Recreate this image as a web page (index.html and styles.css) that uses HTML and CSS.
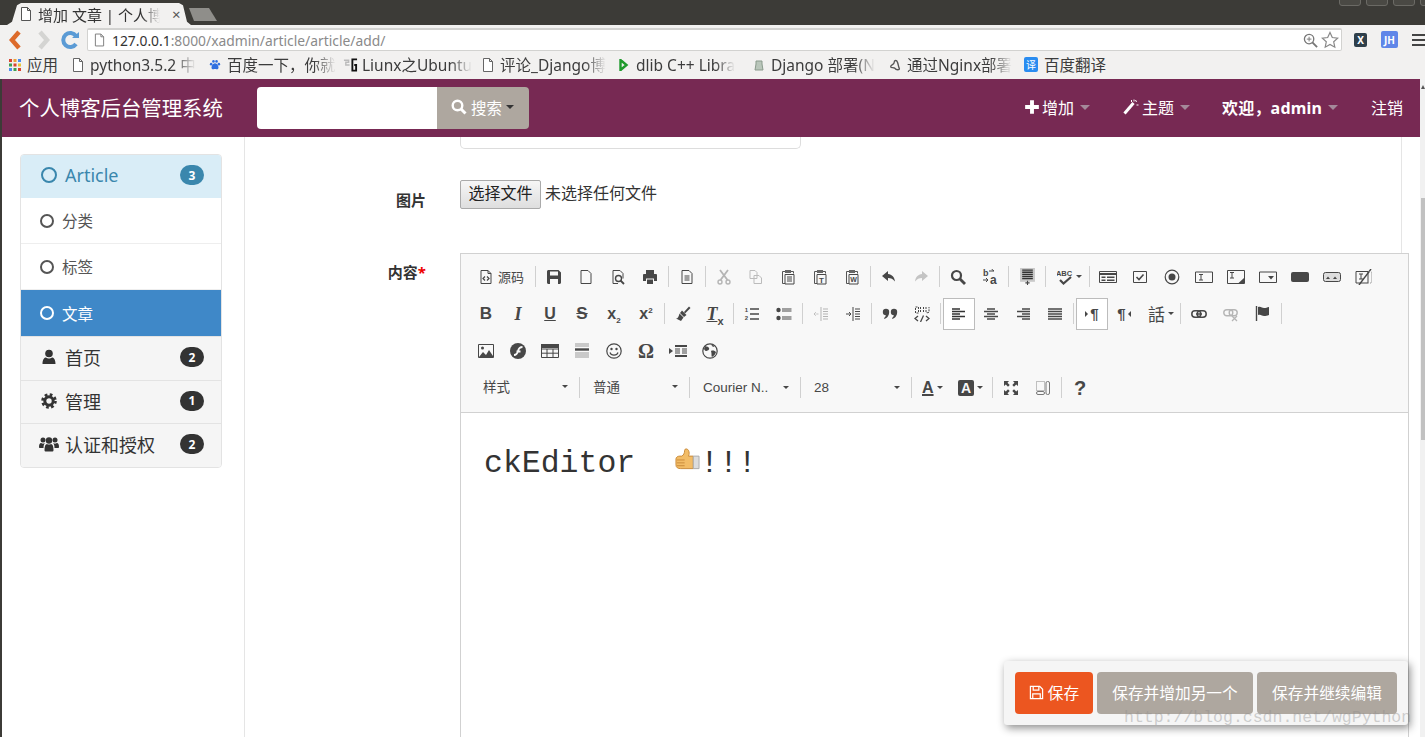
FILE: index.html
```html
<!DOCTYPE html>
<html>
<head>
	<title>增加 文章 | 个人博客后台管理系统</title>
	<link rel="stylesheet" href="styles.css">
</head>
<body>
<div class="window">
	<div class="titlebar">
		<div class="tab">
			<svg class="tab-icon" viewBox="0 0 12 14"><path d="M1.5 .5h6l3 3v10h-9zM7.5 .5v3h3" fill="#fff" stroke="#555"/></svg>
			<span class="tab-title">增加 文章 | 个人博</span>
			<span class="tab-close">×</span>
		</div>
		<div class="new-tab"></div>
		<div class="win-btns"><span></span><span></span><span></span><span></span></div>
	</div>

	<div class="toolbar">
		<svg class="nav-icon" viewBox="0 0 20 22"><path d="M13 3l-7 8 7 8" fill="none" stroke="#dd6a2a" stroke-width="4.5"/></svg>
		<svg class="nav-icon" viewBox="0 0 20 22"><path d="M7 3l7 8-7 8" fill="none" stroke="#d4d4d2" stroke-width="4.5"/></svg>
		<svg class="nav-icon" viewBox="0 0 20 22"><path d="M16 7a7 7 0 1 0 0 8" fill="none" stroke="#5b9bd5" stroke-width="4"/><path d="M12 9h7V3z" fill="#5b9bd5"/></svg>
		<div class="address">
			<svg class="addr-icon" viewBox="0 0 12 14"><path d="M1.5 .5h6l3 3v10h-9zM7.5 .5v3h3" fill="#fff" stroke="#777"/></svg>
			<span class="host">127.0.0.1</span><span class="path">:8000/xadmin/article/article/add/</span>
			<svg class="addr-zoom" viewBox="0 0 16 16"><circle cx="6.5" cy="6.5" r="5" fill="none" stroke="#777" stroke-width="1.4"/><path d="M10 10l5 5" stroke="#777" stroke-width="2"/><path d="M4 6.5h5M6.5 4v5" stroke="#777"/></svg>
			<svg class="addr-star" viewBox="0 0 18 18"><path d="M9 1.5l2.3 5 5.4.6-4 3.7 1.1 5.4L9 13.5l-4.8 2.7 1.1-5.4-4-3.700 5.400-.6z" fill="#fff" stroke="#888" stroke-width="1.2"/></svg>
		</div>
		<span class="ext ext-x">X</span>
		<span class="ext ext-jh">JH</span>
		<span class="menu-icon"><i></i><i></i><i></i></span>
	</div>

	<div class="bookmarks">
		<span class="bm bm-apps">
			<svg class="bm-icon" viewBox="0 0 12 12"><path d="M0 0h3v3H0z" fill="#d9432f"/><path d="M4.5 0h3v3h-3z" fill="#e8a33a"/><path d="M9 0h3v3H9z" fill="#4a8df0"/><path d="M0 4.5h3v3H0z" fill="#3e9e50"/><path d="M4.5 4.5h3v3h-3z" fill="#d9432f"/><path d="M9 4.5h3v3H9z" fill="#e8c53a"/><path d="M0 9h3v3H0z" fill="#4a8df0"/><path d="M4.5 9h3v3h-3z" fill="#3e9e50"/><path d="M9 9h3v3H9z" fill="#d9432f"/></svg>
			<span class="bm-text">应用</span>
		</span>
		<span class="bm bm-python">
			<svg class="bm-icon" viewBox="0 0 12 14"><path d="M1.5 .5h6l3 3v10h-9zM7.5 .5v3h3" fill="#fff" stroke="#666"/></svg>
			<span class="bm-text fade">python3.5.2 中</span>
		</span>
		<span class="bm bm-baidu">
			<svg class="bm-icon" viewBox="0 0 14 14"><path d="M3 9c1-3 2.5-4 4-4s3 1 4 4c.6 2-1 3.5-2.5 3-1-.3-2-.3-3 0C4 12.5 2.4 11 3 9z" fill="#2f6fe0"/><circle cx="2.5" cy="6" r="1.5" fill="#2f6fe0"/><circle cx="5.2" cy="2.8" r="1.5" fill="#2f6fe0"/><circle cx="8.8" cy="2.8" r="1.5" fill="#2f6fe0"/><circle cx="11.5" cy="6" r="1.5" fill="#2f6fe0"/></svg>
			<span class="bm-text fade">百度一下，你就</span>
		</span>
		<span class="bm bm-liunx">
			<svg class="bm-icon wide" viewBox="0 0 16 14"><path d="M1 2h5v2H3v3h4" fill="none" stroke="#bbb" stroke-width="1.5"/><path d="M15 1H10v12h4V7h-2" fill="none" stroke="#111" stroke-width="2"/></svg>
			<span class="bm-text fade">Liunx之Ubuntu</span>
		</span>
		<span class="bm bm-comment">
			<svg class="bm-icon" viewBox="0 0 12 14"><path d="M1.5 .5h6l3 3v10h-9zM7.5 .5v3h3" fill="#fff" stroke="#666"/></svg>
			<span class="bm-text fade">评论_Django博</span>
		</span>
		<span class="bm bm-dlib">
			<svg class="bm-icon" viewBox="0 0 10 14"><path d="M1.5 1v12M1.5 2l6 5-6 5" fill="none" stroke="#1f9a2c" stroke-width="2.4"/></svg>
			<span class="bm-text fade">dlib C++ Libra</span>
		</span>
		<span class="bm bm-deploy">
			<svg class="bm-icon" viewBox="0 0 12 14"><path d="M3 3h6v3l1 6H2l1-6z" fill="#b9c6ba" stroke="#8a9a8c"/></svg>
			<span class="bm-text fade">Django 部署(N</span>
		</span>
		<span class="bm bm-nginx">
			<svg class="bm-icon" viewBox="0 0 14 14"><path d="M2 9c0-3 4-2 4-5S9 1 10 4s1 5 2 7-4 2-5 0-5 0-5-2z" fill="none" stroke="#555" stroke-width="1.6"/></svg>
			<span class="bm-text fade">通过Nginx部署</span>
		</span>
		<span class="bm">
			<span class="bm-fanyi">译</span>
			<span class="bm-text">百度翻译</span>
		</span>
	</div>

	<div class="page">
		<div class="page-main">
			<nav class="navbar">
				<span class="brand">个人博客后台管理系统</span>
				<div class="search">
					<div class="search-input"></div>
					<div class="search-btn">
						<svg class="nav-svg" viewBox="0 0 16 16"><circle cx="6.5" cy="6.5" r="4.8" fill="none" stroke="#fff" stroke-width="2.4"/><path d="M10 10l4.5 4.5" stroke="#fff" stroke-width="3"/></svg>
						<span>搜索</span><span class="caret dark"></span>
					</div>
				</div>
				<div class="nav-right">
					<span class="nav-item nav-add">
						<svg class="nav-svg" viewBox="0 0 14 14"><path d="M7 1v12M1 7h12" stroke="#fff" stroke-width="3.4"/></svg>
						<span>增加</span><span class="caret"></span>
					</span>
					<span class="nav-item nav-theme">
						<svg class="nav-svg nav-wand" viewBox="0 0 16 16"><path d="M2 14.5L11 4" stroke="#fff" stroke-width="3"/><path d="M9 1v2M14 6h2M13 1l1 2M11.5 .5v2" stroke="#fff"/></svg>
						<span>主题</span><span class="caret"></span>
					</span>
					<span class="nav-item nav-user"><b>欢迎，admin</b><span class="caret"></span></span>
					<span class="nav-item nav-logout">注销</span>
				</div>
			</nav>

			<div class="content">
				<aside class="sidebar">
					<ul class="side-list">
						<li class="side-head">
							<span class="ring ring-big"></span><span class="side-label">Article</span>
							<span class="badge badge-blue">3</span>
						</li>
						<li class="side-sub"><span class="ring"></span>分类</li>
						<li class="side-sub"><span class="ring"></span>标签</li>
						<li class="side-sub active"><span class="ring"></span>文章</li>
						<li class="side-top">
							<svg class="side-icon" viewBox="0 0 16 16"><circle cx="8" cy="4.5" r="3.8"/><path d="M1.5 15c0-5 2-6.5 3.500-6.500 1 .8 2 1 3 1s2-.2 3-1c1.500 0 3.500 1.500 3.500 6.500z"/></svg>
							<span class="side-label">首页</span><span class="badge">2</span>
						</li>
						<li class="side-top">
							<svg class="side-icon" viewBox="0 0 16 16"><circle cx="8" cy="8" r="4.2" fill="none" stroke="#333" stroke-width="3"/><circle cx="8" cy="8" r="6.5" fill="none" stroke="#333" stroke-width="2.6" stroke-dasharray="2.7 2.4"/></svg>
							<span class="side-label">管理</span><span class="badge">1</span>
						</li>
						<li class="side-top">
							<svg class="side-icon side-icon-wide" viewBox="0 0 20 16"><circle cx="4" cy="4" r="2.5"/><circle cx="16" cy="4" r="2.5"/><path d="M0 11c0-3 1-4 2-4l2 .8L6 7c-1 1-1.5 2.5-1.5 5H1c-.6 0-1-.4-1-1zM20 11c0-3-1-4-2-4l-2 .8L14 7c1 1 1.5 2.5 1.5 5H19c.6 0 1-.4 1-1z"/><circle cx="10" cy="4.5" r="3.2"/><path d="M5.5 14c0-4 1-6 2.5-6 1 .8 3 .8 4 0 1.5 0 2.5 2 2.5 6 0 1-.5 1.5-1.5 1.5H7c-1 0-1.5-.5-1.5-1.5z"/></svg>
							<span class="side-label">认证和授权</span><span class="badge">2</span>
						</li>
					</ul>
				</aside>

				<main class="main">
					<div class="cut-input"></div>

					<div class="form-row row-image">
						<label class="form-label">图片</label>
						<div class="file-field">
							<span class="file-btn">选择文件</span>
							<span class="file-name">未选择任何文件</span>
						</div>
					</div>

					<div class="form-row row-body">
						<label class="form-label">内容<em>*</em></label>
						<div class="editor">
							<div class="ck-toolbar">
								<div class="ck-row">
									<span class="ck-btn ck-source">
										<svg class="ic" viewBox="0 0 16 16"><path d="M3 1.5h7l3 3v10H3zM10 1.5v3h3" fill="none" stroke="#474747"/><path d="M7 7.5L5 9.5l2 2M9 7.5l2 2-2 2" fill="none" stroke="#474747" stroke-width="1.2"/></svg>
										<span class="ck-src-text">源码</span>
									</span>
									<i class="sep"></i>
									<span class="ck-btn"><svg class="ic" viewBox="0 0 16 16"><path d="M1 2.5C1 1.7 1.7 1 2.5 1h10L15 3.5v10c0 .8-.7 1.5-1.5 1.5h-11C1.7 15 1 14.3 1 13.5zM4 2.5v4h8v-4zM4 10v5h8v-5z" fill="#474747" fill-rule="evenodd"/></svg></span>
									<span class="ck-btn"><svg class="ic" viewBox="0 0 16 16"><path d="M3 1.5h7l3 3v10H3z" fill="none" stroke="#474747"/></svg></span>
									<span class="ck-btn"><svg class="ic" viewBox="0 0 16 16"><path d="M3 14.5v-13h7l3 3v5M3 14.5h5" fill="none" stroke="#474747"/><circle cx="8.5" cy="9.5" r="3" fill="none" stroke="#474747" stroke-width="1.4"/><path d="M10.5 11.5l3.5 3.5" stroke="#474747" stroke-width="1.8"/></svg></span>
									<span class="ck-btn"><svg class="ic" viewBox="0 0 16 16"><path d="M4 1h8v4H4zM1 6c0-.5.5-1 1-1h12c.5 0 1 .5 1 1v6h-3V9.5H4V12H1zM5 10.5h6V15H5z" fill="#474747"/></svg></span>
									<i class="sep"></i>
									<span class="ck-btn"><svg class="ic" viewBox="0 0 16 16"><path d="M3 1.5h7l3 3v10H3z" fill="none" stroke="#474747"/><path d="M5.5 7h5M5.5 9h5M5.5 11h5" stroke="#474747"/></svg></span>
									<i class="sep"></i>
									<span class="ck-btn"><svg class="ic" viewBox="0 0 16 16"><path d="M4 1l7.5 10M12 1L4.5 11" stroke="#b5b5b5" stroke-width="1.8"/><circle cx="4" cy="13" r="2" fill="none" stroke="#b5b5b5" stroke-width="1.4"/><circle cx="12" cy="13" r="2" fill="none" stroke="#b5b5b5" stroke-width="1.4"/></svg></span>
									<span class="ck-btn"><svg class="ic" viewBox="0 0 16 16"><path d="M2 1.5h5l2 2v6H2zM6 6.5h5L13.5 9v5.5H6z" fill="#f8f8f8" stroke="#bbb"/></svg></span>
									<span class="ck-btn"><svg class="ic" viewBox="0 0 16 16"><path d="M5 2.5H2.5v12H5M11 2.5h2.5v2" fill="none" stroke="#555"/><path d="M5 1h6v3H5z" fill="#666"/><path d="M5 5.5h9V15H5z" fill="#f8f8f8" stroke="#474747"/><path d="M7 8h5M7 10h5M7 12h5" stroke="#474747"/></svg></span>
									<span class="ck-btn"><svg class="ic" viewBox="0 0 16 16"><path d="M5 2.5H2.5v12H5M11 2.5h2.5v2" fill="none" stroke="#555"/><path d="M5 1h6v3H5z" fill="#666"/><path d="M5 5.5h9V15H5z" fill="#f8f8f8" stroke="#474747"/><text x="9.5" y="13.5" class="ic-text" font-size="8">T</text></svg></span>
									<span class="ck-btn"><svg class="ic" viewBox="0 0 16 16"><path d="M5 2.5H2.5v12H5M11 2.5h2.5v2" fill="none" stroke="#555"/><path d="M5 1h6v3H5z" fill="#666"/><path d="M5 5.5h9V15H5z" fill="#f8f8f8" stroke="#474747"/><text x="9.5" y="13" class="ic-text" font-size="7">W</text></svg></span>
									<i class="sep"></i>
									<span class="ck-btn"><svg class="ic" viewBox="0 0 16 16"><path d="M7 2L1 7l6 5V9c3 0 5 1 7 3.5C13.5 8 11 5.500 7 5z" fill="#474747"/></svg></span>
									<span class="ck-btn"><svg class="ic" viewBox="0 0 16 16"><path d="M9 2l6 5-6 5V9c-3 0-5 1-7 3.5C2.5 8 5 5.5 9 5z" fill="#c4c4c4"/></svg></span>
									<i class="sep"></i>
									<span class="ck-btn"><svg class="ic" viewBox="0 0 16 16"><circle cx="6.5" cy="6.5" r="4.5" fill="none" stroke="#474747" stroke-width="2.2"/><path d="M10 10l5 5" stroke="#474747" stroke-width="2.8"/></svg></span>
									<span class="ck-btn"><svg class="ic" viewBox="0 0 16 16"><text x="1" y="7" class="ic-text left" font-size="9">b</text><text x="8" y="14.5" class="ic-text left" font-size="12">a</text><path d="M7 2h5M9.5 0L12 2M1 11h5M4 9l2 2-2 2" fill="none" stroke="#474747"/></svg></span>
									<i class="sep"></i>
									<span class="ck-btn"><svg class="ic ic-selectall" viewBox="0 0 16 16"><path d="M1 0h14v13H1z" fill="#c9c9c9"/><path d="M3 2h10M3 4h10M3 6h10M3 8h10M3 10h10" stroke="#333" stroke-width="1.2"/><path d="M6 14h4M8 12v4" stroke="#474747"/></svg></span>
									<i class="sep"></i>
									<span class="ck-btn ck-arrow-39"><svg class="ic" viewBox="0 0 16 16"><text x="7" y="6.5" class="ic-text" font-size="7.5">ABC</text><path d="M3 11l3.5 3.5L14 8" fill="none" stroke="#474747" stroke-width="2.2"/></svg><i class="mini-caret"></i></span>
									<i class="sep"></i>
									<span class="ck-btn"><svg class="ic ic-w" viewBox="0 0 18 16"><path d="M.5 2.5h17v11H.5z" fill="none" stroke="#474747"/><path d="M.5 5h17" stroke="#474747" stroke-width="2"/><path d="M2.5 7.5h4V9h-4zM2.5 10.5h4V12h-4zM8 7.5h7.5V9H8zM8 10.5h7.5V12H8z" fill="#474747"/></svg></span>
									<span class="ck-btn"><svg class="ic" viewBox="0 0 16 16"><path d="M1.5 2.5h13v11h-13z" fill="none" stroke="#474747"/><path d="M4.5 8L7 10.5l4.5-5" fill="none" stroke="#474747" stroke-width="1.6"/></svg></span>
									<span class="ck-btn"><svg class="ic" viewBox="0 0 16 16"><circle cx="8" cy="8" r="6.8" fill="none" stroke="#474747" stroke-width="1.2"/><circle cx="8" cy="8" r="3.5" fill="#474747"/></svg></span>
									<span class="ck-btn"><svg class="ic ic-w" viewBox="0 0 18 16"><path d="M.5 3h17v10.500H.5z" fill="none" stroke="#474747"/><path d="M4 5.500h4M4 11h4M6 5.500V11" stroke="#474747"/></svg></span>
									<span class="ck-btn"><svg class="ic ic-w" viewBox="0 0 18 16"><path d="M.5 1.500h17v13H.5z" fill="none" stroke="#474747"/><path d="M3 3.500h4M3 9h4M5 3.500V9" stroke="#474747"/><path d="M17 9v5.500h-6z" fill="#474747"/></svg></span>
									<span class="ck-btn"><svg class="ic ic-w" viewBox="0 0 18 16"><path d="M.5 3h17v10.500H.5z" fill="none" stroke="#474747"/><path d="M9 7h6l-3 3.500z" fill="#474747"/></svg></span>
									<span class="ck-btn"><svg class="ic ic-w" viewBox="0 0 18 16"><rect x="0" y="3" width="18" height="10" rx="2" fill="#474747"/></svg></span>
									<span class="ck-btn"><svg class="ic ic-w" viewBox="0 0 18 16"><rect x=".5" y="3.5" width="17" height="9" rx="2" fill="#ddd" stroke="#474747"/><path d="M3 10l2-2.500L7 10zM10 10l2-2.500 2 2.500z" fill="#474747"/></svg></span>
									<span class="ck-btn"><svg class="ic ic-w" viewBox="0 0 18 16"><path d="M1 2.500h12V14H1z" fill="none" stroke="#474747"/><path d="M4 5h4M4 10h4M6 5v5" stroke="#474747"/><path d="M4 16L16 0" stroke="#474747" stroke-width="1.4"/><path d="M14 3h2.500v11H10" fill="none" stroke="#999" stroke-dasharray="1 1"/></svg></span>
								</div>

								<div class="ck-row">
									<span class="ck-btn ck-txt ck-b">B</span>
									<span class="ck-btn ck-txt ck-i">I</span>
									<span class="ck-btn ck-txt ck-u">U</span>
									<span class="ck-btn ck-txt ck-s">S</span>
									<span class="ck-btn ck-txt ck-x"><span>x<sub>2</sub></span></span>
									<span class="ck-btn ck-txt ck-x"><span>x<sup>2</sup></span></span>
									<i class="sep"></i>
									<span class="ck-btn"><svg class="ic" viewBox="0 0 16 16"><path d="M9 6l5-5.500L15.500 2 10 7.500z" fill="#474747"/><path d="M7 4.500L11.500 9 9 11 5 7z" fill="#474747"/><path d="M4.500 7.500l4 4L6 15 1 12.500c2 0 2.500-1.500 3.500-5z" fill="#474747"/></svg></span>
									<span class="ck-btn ck-txt ck-tx"><span><u>T</u><sub>x</sub></span></span>
									<i class="sep"></i>
									<span class="ck-btn"><svg class="ic" viewBox="0 0 16 16"><path d="M6 3h9M6 8h9M6 13h9" stroke="#474747" stroke-width="1.5"/><text x="2.5" y="6" class="ic-text" font-size="6">1</text><text x="2.5" y="14" class="ic-text" font-size="6">2</text></svg></span>
									<span class="ck-btn"><svg class="ic" viewBox="0 0 16 16"><circle cx="2.5" cy="4" r="2.2" fill="#474747"/><circle cx="2.5" cy="12" r="2.2" fill="#474747"/><path d="M6 3h9.5M6 5h9.5M6 11h9.5M6 13h9.5" stroke="#474747"/></svg></span>
									<i class="sep"></i>
									<span class="ck-btn"><svg class="ic" viewBox="0 0 16 16"><path d="M8 1v14M10 3h5M10 5.500h5M10 8h5M10 10.500h5M10 13h5" stroke="#b5b5b5"/><path d="M1 8h5M3 6L1 8l2 2" fill="none" stroke="#b5b5b5" stroke-dasharray="1 .6"/></svg></span>
									<span class="ck-btn"><svg class="ic" viewBox="0 0 16 16"><path d="M8 1v14M10 3h5M10 5.500h5M10 8h5M10 10.500h5M10 13h5" stroke="#474747"/><path d="M1 8h5M4 6l2 2-2 2" fill="none" stroke="#474747"/></svg></span>
									<i class="sep"></i>
									<span class="ck-btn"><svg class="ic" viewBox="0 0 16 16"><circle cx="4" cy="6" r="3.2" fill="#474747"/><path d="M7 6c0 4-2 6-4.500 7L2 12c1.500-1 2-2.500 2-4z" fill="#474747"/><circle cx="12" cy="6" r="3.2" fill="#474747"/><path d="M15 6c0 4-2 6-4.500 7L10 12c1.500-1 2-2.500 2-4z" fill="#474747"/></svg></span>
									<span class="ck-btn"><svg class="ic" viewBox="0 0 16 16"><path d="M1.5 1h3v6h-3zM6.500 1v5M9.500 1v5M12 1v5c0 1 3 1 3 0V1" fill="none" stroke="#474747" stroke-dasharray="2 1"/><path d="M4 10l-3 2.500L4 15M12 10l3 2.500-3 2.500M9.500 9.500L6.500 16" fill="none" stroke="#474747" stroke-width="1.3"/></svg></span>
									<i class="sep"></i>
									<span class="ck-btn boxed"><svg class="ic" viewBox="0 0 16 16"><path d="M1 3h8M1 5.500h13M1 8h8M1 10.500h13M1 13h8" stroke="#333" stroke-width="1.3"/></svg></span>
									<span class="ck-btn"><svg class="ic" viewBox="0 0 16 16"><path d="M4 3h8M1 5.500h14M4 8h8M1 10.500h14M4 13h8" stroke="#474747" stroke-width="1.3"/></svg></span>
									<span class="ck-btn"><svg class="ic" viewBox="0 0 16 16"><path d="M7 3h8M2 5.500h13M7 8h8M2 10.500h13M7 13h8" stroke="#474747" stroke-width="1.3"/></svg></span>
									<span class="ck-btn"><svg class="ic" viewBox="0 0 16 16"><path d="M1 3h14M1 5.500h14M1 8h14M1 10.500h14M1 13h14" stroke="#474747" stroke-width="1.3"/></svg></span>
									<i class="sep"></i>
									<span class="ck-btn boxed ck-txt ck-para"><i class="tri-r"></i>¶</span>
									<span class="ck-btn ck-txt ck-para">¶<i class="tri-l"></i></span>
									<span class="ck-btn ck-arrow-38 ck-txt ck-lang">話<i class="mini-caret"></i></span>
									<i class="sep"></i>
									<span class="ck-btn"><svg class="ic" viewBox="0 0 16 16"><rect x=".8" y="4.8" width="9" height="6.4" rx="3.2" fill="none" stroke="#474747" stroke-width="1.5"/><rect x="6.2" y="4.8" width="9" height="6.4" rx="3.2" fill="none" stroke="#474747" stroke-width="1.5"/><path d="M5 8h6" stroke="#474747" stroke-width="1.5"/></svg></span>
									<span class="ck-btn"><svg class="ic" viewBox="0 0 16 16"><rect x=".8" y="3.8" width="9" height="6" rx="3" fill="none" stroke="#b5b5b5" stroke-width="1.4"/><rect x="6.2" y="3.8" width="8" height="6" rx="3" fill="none" stroke="#b5b5b5" stroke-width="1.4"/><path d="M9 10l5 5M14 10l-5 5" stroke="#b5b5b5" stroke-width="1.3"/></svg></span>
									<span class="ck-btn"><svg class="ic" viewBox="0 0 16 16"><path d="M1.5 0v15" stroke="#474747" stroke-width="1.4"/><path d="M3 1c3-1 4 1 6 1s3-.5 5-1v8c-2 .7-3 1-5 1S6 8 3 9z" fill="#474747"/></svg></span>
									<i class="sep"></i>
								</div>

								<div class="ck-row">
									<span class="ck-btn"><svg class="ic" viewBox="0 0 16 16"><path d="M.5 1.500h15v13H.5z" fill="#f8f8f8" stroke="#474747"/><path d="M1 14l4-5 3 3 3-5 4 6v1H1z" fill="#474747"/><circle cx="4.5" cy="5" r="1.5" fill="#474747"/></svg></span>
									<span class="ck-btn"><svg class="ic" viewBox="0 0 16 16"><circle cx="8" cy="8" r="8" fill="#474747"/><path d="M4 12c3 0 3.500-2 4-4s1.500-4 4.500-4M6.500 8.500h4" fill="none" stroke="#f8f8f8" stroke-width="1.8"/></svg></span>
									<span class="ck-btn"><svg class="ic ic-w" viewBox="0 0 18 16"><path d="M.5 1.500h17v13H.5zM.5 6h17M.5 10.200h17M6 6v8.500M12 6v8.500" fill="none" stroke="#474747"/><path d="M0 1h18v4H0z" fill="#474747"/></svg></span>
									<span class="ck-btn"><svg class="ic" viewBox="0 0 16 16"><path d="M1 1h14M1 3h14M1 10h14M1 12h14M1 14h14" stroke="#9a9a9a"/><path d="M1 6.500h14" stroke="#474747" stroke-width="2.4"/></svg></span>
									<span class="ck-btn"><svg class="ic" viewBox="0 0 16 16"><circle cx="8" cy="8" r="7.2" fill="none" stroke="#474747" stroke-width="1.2"/><circle cx="5.5" cy="6" r="1.2" fill="#474747"/><circle cx="10.5" cy="6" r="1.2" fill="#474747"/><path d="M4 9.500c1 3.500 7 3.500 8 0" fill="none" stroke="#474747" stroke-width="1.2"/></svg></span>
									<span class="ck-btn ck-txt ck-omega">Ω</span>
									<span class="ck-btn"><svg class="ic ic-w" viewBox="0 0 18 16"><path d="M0 5l4 3-4 3z" fill="#474747"/><path d="M6 3h12M6 13h12" stroke="#474747" stroke-width="2"/><path d="M6 6h5M13 6h5M6 8h5M13 8h5M6 10h5M13 10h5" stroke="#474747"/></svg></span>
									<span class="ck-btn"><svg class="ic" viewBox="0 0 16 16"><circle cx="8" cy="8" r="7.2" fill="#f8f8f8" stroke="#474747" stroke-width="1.2"/><path d="M3 3c2 1 3 0 4 2S5 8 4 8 2 6 2 6zM9 8c2-1 4 0 5 1-.5 2-2 4-4 5-1-1 0-3-1-6zM9 1.500L11 4l2-1" fill="#474747"/></svg></span>
								</div>

								<div class="ck-row ck-row-combo">
									<span class="combo combo-cjk">样式<i class="mini-caret"></i></span><i class="sep flat"></i>
									<span class="combo combo-cjk combo-second">普通<i class="mini-caret"></i></span><i class="sep flat"></i>
									<span class="combo combo-font">Courier N..<i class="mini-caret"></i></span><i class="sep flat"></i>
									<span class="combo combo-font">28<i class="mini-caret"></i></span><i class="sep flat sep-tail"></i>
									<span class="ck-btn ck-arrow-38 ck-txt ck-color"><u>A</u><i class="mini-caret"></i></span>
									<span class="ck-btn ck-arrow-40 ck-txt"><span class="ck-bgcolor">A</span><i class="mini-caret"></i></span>
									<i class="sep"></i>
									<span class="ck-btn"><svg class="ic" viewBox="0 0 16 16"><path d="M1 1h5L4.500 2.800l2.200 2.200-1.700 1.700-2.200-2.200L1 6zM15 1v5l-1.800-1.500L11 6.700 9.300 5l2.200-2.200L10 1zM1 15v-5l1.800 1.500L5 9.300 6.700 11l-2.200 2.200L6 15zM15 15h-5l1.500-1.800L9.300 11 11 9.300l2.200 2.200L15 10z" fill="#474747"/></svg></span>
									<span class="ck-btn"><svg class="ic" viewBox="0 0 16 16"><path d="M1.500 1.500h8v9h-8z" fill="none" stroke="#888" stroke-dasharray="1 1"/><rect x="11" y="1.5" width="3.5" height="13" rx="1.5" fill="none" stroke="#777"/><rect x="1.5" y="11.5" width="8" height="3" rx="1.5" fill="none" stroke="#777"/></svg></span>
									<i class="sep"></i>
									<span class="ck-btn ck-txt ck-help">?</span>
								</div>
							</div>
							<div class="ck-body">
								<span class="ck-line">ckEditor &nbsp;<svg class="emoji" viewBox="0 0 26 22"><path d="M19 8v13H6c-3 0-5-1-5-4v-6c0-2 2-3 4-3h2c2-1 3-3 3-6 0-2 3-2 4 0 1 2 1 4 0 6z" fill="#f2bc66" stroke="#c98a3a"/><path d="M2 12h8M2 15h8M2 18h8" stroke="#c98a3a"/><path d="M19 8h6v13h-6z" fill="#dcdcdc" stroke="#aaa"/></svg>!!!</span>
							</div>
						</div>
					</div>
				</main>
			</div>
		</div>
		<div class="scrollbar"><i class="scroll-up"></i><div class="scroll-thumb"></div></div>
	</div>

	<div class="save-bar">
		<span class="save-btn primary">
			<svg class="save-icon" viewBox="0 0 16 16"><path d="M1.500 1.500h10l3 3v10h-13zM4.500 1.500v4h6v-4M4 14.500v-5h8v5" fill="none" stroke="#fff" stroke-width="1.3"/></svg>
			<span>保存</span>
		</span>
		<span class="save-btn btn-more"><span>保存并增加另一个</span></span>
		<span class="save-btn btn-edit"><span>保存并继续编辑</span></span>
	</div>
	<div class="watermark">http://blog.csdn.net/wgPython</div>
</div>
</body>
</html>
```

FILE: styles.css
```css
* {
	box-sizing: border-box;
}

html,
body {
	margin: 0;
	height: 100%;
	overflow: hidden;
}

body {
	font-family: "Noto Sans", "Noto Sans CJK SC", sans-serif;
	color: #333;
	background-color: #fff;
}

.window {
	position: relative;
	display: flex;
	flex-direction: column;
	width: 1425px;
	height: 737px;
	overflow: hidden;
}

/* browser chrome */
.titlebar {
	display: flex;
	flex: none;
	height: 25px;
	padding-left: 7px;
	background-color: #3c3b37;
}

.tab {
	display: flex;
	align-items: center;
	width: 184px;
	height: 22px;
	margin-top: 3px;
	padding-left: 13px;
	background-color: #f2f1f0;
	clip-path: polygon(0 100%, 5px 85%, 10px 10%, 14px 0, 172px 0, 176px 10%, 180px 85%, 184px 100%);
	font-size: 15px;
	color: #333;
}

.tab-icon {
	flex: none;
	width: 12px;
	height: 14px;
	margin-right: 6px;
}

.tab-title {
	width: 122px;
	white-space: nowrap;
	-webkit-mask-image: linear-gradient(to right, #000 85%, transparent);
}

.tab-close {
	margin-left: 12px;
	font-size: 15px;
	color: #555;
}

.new-tab {
	width: 28px;
	height: 13px;
	margin: 8px 0 0 -2px;
	background-color: #8f8e8a;
	clip-path: polygon(0 0, 20px 0, 28px 100%, 5px 100%);
}

.win-btns {
	display: flex;
	gap: 5px;
	margin-left: auto;
	margin-right: -17px;
}

.win-btns span {
	width: 22px;
	height: 9px;
	margin-top: -3px;
	border: 1px solid #6b6a65;
	border-radius: 3px;
	background-color: #4a4944;
}

.toolbar {
	display: flex;
	flex: none;
	align-items: center;
	height: 29px;
	padding-left: 6px;
	background-color: #f2f1f0;
}

.nav-icon {
	flex: none;
	width: 20px;
	height: 22px;
	margin-right: 7px;
}

.address {
	display: flex;
	flex: none;
	align-items: center;
	width: 1255px;
	height: 23px;
	padding: 0 2px 0 6px;
	border: 1px solid #d2d2d0;
	border-top: 2px solid #d2d2d0;
	border-radius: 2px;
	background-color: #fff;
	font-size: 13.85px;
	white-space: nowrap;
}

.addr-icon {
	width: 11px;
	height: 14px;
	margin-right: 7px;
}

.host {
	color: #333;
}

.path {
	color: #8a8a8a;
}

.addr-zoom {
	width: 15px;
	height: 15px;
	margin-left: auto;
}

.addr-star {
	width: 18px;
	height: 18px;
	margin-left: 3px;
}

.ext {
	display: flex;
	flex: none;
	align-items: center;
	justify-content: center;
	width: 13px;
	height: 14px;
	margin-left: 12px;
	border-radius: 2px;
	background-color: #2f3f4a;
	font-size: 10px;
	font-weight: bold;
	color: #fff;
}

.ext-jh {
	width: 17px;
	height: 17px;
	margin-left: 14px;
	background-color: #5f86e8;
}

.menu-icon {
	display: flex;
	flex: none;
	flex-direction: column;
	gap: 3px;
	width: 20px;
	margin-left: 14px;
}

.menu-icon i {
	height: 2px;
	background-color: #444;
}

.bookmarks {
	display: flex;
	flex: none;
	align-items: center;
	height: 25px;
	padding: 0 0 4px 9px;
	background-color: #f2f1f0;
	border-left: 2px solid #f2f1f0;
	font-size: 15.5px;
	color: #3c3c3c;
	white-space: nowrap;
}

.bm {
	display: flex;
	flex: none;
	align-items: center;
}

.bm-icon {
	flex: none;
	width: 12px;
	height: 14px;
	margin-right: 6px;
}

.bm-icon.wide {
	width: 15px;
	margin-right: 4px;
}

.fade {
	-webkit-mask-image: linear-gradient(to right, #000 80%, transparent);
}

.bm-apps { width: 63px; margin-left: -2px; }
.bm-python { width: 137px; }
.bm-baidu { width: 134px; }
.bm-liunx { width: 139px; }
.bm-comment { width: 136px; }
.bm-dlib { width: 135px; }
.bm-deploy { width: 136px; }
.bm-nginx { width: 135px; }

.bm-fanyi {
	display: flex;
	align-items: center;
	justify-content: center;
	width: 14px;
	height: 15px;
	margin-right: 6px;
	border-radius: 2px;
	background-color: #2a8cf0;
	font-size: 10px;
	color: #fff;
}

/* page */
.page {
	display: flex;
	flex: 1;
	min-height: 0;
	border-left: 2px solid #3c3b37;
}

.page-main {
	display: flex;
	flex: 1;
	flex-direction: column;
	min-width: 0;
}

.scrollbar {
	flex: none;
	width: 5px;
	padding: 6px 0 0 1px;
	background-color: #f1f1f1;
}

.scroll-up {
	display: block;
	width: 0;
	height: 0;
	margin-bottom: 109px;
	border-bottom: 4px solid #555;
	border-left: 2px solid transparent;
	border-right: 2px solid transparent;
}

.scroll-thumb {
	height: 242px;
	background-color: #c1c1c1;
}

.navbar {
	display: flex;
	flex: none;
	align-items: center;
	height: 58px;
	padding-left: 17px;
	background-color: #772953;
	color: #fff;
}

.brand {
	flex: none;
	width: 238px;
	padding-bottom: 2px;
	font-size: 20.4px;
}

.search {
	display: flex;
	flex: none;
	height: 42px;
}

.search-input {
	width: 180px;
	border-radius: 4px 0 0 4px;
	background-color: #fff;
}

.search-btn {
	display: flex;
	align-items: center;
	width: 92px;
	padding: 0 0 2px 14px;
	border-radius: 0 4px 4px 0;
	background-color: #aea79f;
	font-size: 15.5px;
}

.nav-svg {
	flex: none;
	width: 16px;
	height: 16px;
	margin-right: 4px;
}

.nav-add .nav-svg {
	margin-right: 2px;
}

.nav-wand {
	width: 17px;
	margin-right: 3px;
}

.caret {
	flex: none;
	width: 0;
	height: 0;
	margin-left: 6px;
	border-top: 5px solid #a4899a;
	border-left: 5px solid transparent;
	border-right: 5px solid transparent;
}

.caret.dark {
	margin-left: 4px;
	border-top-color: #333;
	border-top-width: 4px;
	border-left-width: 4px;
	border-right-width: 4px;
}

.nav-right {
	display: flex;
	flex: 1;
	align-items: center;
	padding: 0 0 2px 495px;
	font-size: 16px;
}

.nav-item {
	display: flex;
	flex: none;
	align-items: center;
}

.nav-add { width: 98px; }
.nav-theme { width: 100px; }
.nav-user { width: 149px; }

.nav-user b {
	font-weight: 700;
	letter-spacing: 0.2px;
}

.content {
	display: flex;
	flex: 1;
	min-height: 0;
}

.sidebar {
	flex: none;
	width: 243px;
	padding: 17px 0 0 18px;
	border-right: 1px solid #e5e5e5;
}

.side-list {
	width: 202px;
	margin: 0;
	padding: 0;
	list-style: none;
	border: 1px solid #e3e3e3;
	border-radius: 4px;
	overflow: hidden;
}

.side-list li {
	display: flex;
	align-items: center;
}

.side-head {
	height: 43px;
	padding: 0 17px 3px 20px;
	background-color: #d9edf7;
	font-size: 18px;
	color: #3a87ad;
}

.side-sub {
	height: 46px;
	padding-left: 19px;
	border-bottom: 1px solid #eee;
	font-size: 15.5px;
	color: #555;
}

.side-sub.active {
	background-color: #3f88c8;
	color: #fff;
	border-bottom: 0;
}

.side-top {
	height: 43.5px;
	padding: 0 17px 2px 19px;
	border-top: 1px solid #e3e3e3;
	background-color: #f5f5f5;
	font-size: 18px;
	color: #333;
}

.ring {
	flex: none;
	width: 14px;
	height: 14px;
	margin-right: 8px;
	border: 2.5px solid currentColor;
	border-radius: 50%;
}

.ring-big {
	width: 16px;
	height: 16px;
}

.side-label {
	flex: 1;
}

.side-icon {
	flex: none;
	width: 16px;
	height: 16px;
	margin: 0 8px 0 1px;
	fill: #333;
}

.side-icon-wide {
	width: 20px;
	margin: 0 6px 0 -1px;
}

.badge {
	display: flex;
	flex: none;
	align-items: center;
	justify-content: center;
	width: 24px;
	height: 20px;
	border-radius: 10px;
	background-color: #333;
	font-size: 12px;
	font-weight: bold;
	color: #fff;
}

.badge-blue {
	background-color: #3a87ad;
}

.main {
	flex: none;
	width: 1157px;
	border-right: 1px solid #e5e5e5;
}

.cut-input {
	width: 341px;
	height: 12px;
	margin-left: 215px;
	border: 1px solid #ddd;
	border-top: 0;
	border-radius: 0 0 5px 5px;
}

.form-row {
	display: flex;
}

.form-label {
	flex: none;
	width: 181px;
	font-size: 15px;
	font-weight: bold;
	color: #333;
	text-align: right;
}

.form-label em {
	font-style: normal;
	color: #e00;
}

.row-image {
	height: 104px;
	padding-top: 31px;
}

.row-image .form-label {
	padding-top: 9px;
}

.row-body .form-label {
	padding-top: 8px;
}

.file-field {
	display: flex;
	align-items: flex-start;
	height: 29px;
	margin-left: 34px;
	font-size: 16px;
	color: #333;
}

.file-btn {
	width: 81px;
	height: 29px;
	border: 1px solid #aaa;
	border-radius: 2px;
	background: linear-gradient(#f6f6f6, #dedede);
	color: #222;
	line-height: 25px;
	text-align: center;
}

.file-name {
	margin-left: 4px;
	line-height: 27px;
}

.editor {
	flex: none;
	width: 949px;
	height: 600px;
	margin-left: 34px;
	border: 1px solid #d1d1d1;
	background-color: #fff;
}

.ck-toolbar {
	height: 159px;
	padding: 4px 0 0 9px;
	border-bottom: 1px solid #d1d1d1;
	background-color: #f8f8f8;
}

.ck-row {
	display: flex;
	align-items: center;
	height: 37px;
}

.ck-row-combo {
	margin-left: -9px;
}

.ck-btn {
	display: flex;
	flex: none;
	align-items: center;
	justify-content: center;
	width: 32px;
	height: 32px;
	color: #474747;
}

.ic {
	flex: none;
	width: 16px;
	height: 16px;
}

.ic-w {
	width: 18px;
}

.ic-text {
	font-family: "Liberation Sans", sans-serif;
	font-weight: bold;
	fill: #474747;
	text-anchor: middle;
}

.ic-text.left {
	text-anchor: start;
}

.ic-selectall {
	width: 17px;
	height: 17px;
}

.sep {
	flex: none;
	width: 1px;
	height: 21px;
	margin: 0 2px;
	background-color: #d0d0d0;
}

.sep.flat {
	margin: 0;
}

.sep-tail {
	margin-right: 2px;
}

.ck-source {
	justify-content: flex-start;
	width: 63px;
	padding-left: 8px;
}

.ck-src-text {
	margin-left: 4px;
	font-size: 13px;
}

.ck-arrow-38 { width: 38px; justify-content: flex-start; padding-left: 8px; }
.ck-arrow-39 { width: 39px; justify-content: flex-start; padding-left: 9px; }
.ck-arrow-40 { width: 40px; justify-content: flex-start; padding-left: 8px; }

.mini-caret {
	flex: none;
	width: 0;
	height: 0;
	margin-left: 3px;
	border-top: 3px solid #474747;
	border-left: 3px solid transparent;
	border-right: 3px solid transparent;
}

.ck-txt {
	font-family: "Liberation Sans", sans-serif;
	font-size: 16px;
	font-weight: bold;
	line-height: 1;
}

.ck-b {
	font-size: 17px;
}

.ck-i {
	font-family: "Liberation Serif", serif;
	font-size: 18px;
	font-style: italic;
}

.ck-u {
	text-decoration: underline;
}

.ck-s {
	font-size: 17px;
	text-decoration: line-through;
}

.ck-x sub,
.ck-x sup {
	font-size: 8px;
	line-height: 0;
}

.ck-tx {
	font-family: "Liberation Serif", serif;
	font-size: 18px;
	font-style: italic;
}

.ck-tx sub {
	font-family: "Liberation Sans", sans-serif;
	font-size: 11px;
	font-style: normal;
	line-height: 0;
}

.boxed {
	border: 1px solid #bcbcbc;
	background-color: #fff;
}

.ck-para {
	font-size: 15px;
}

.tri-r,
.tri-l {
	width: 0;
	height: 0;
	border-top: 3px solid transparent;
	border-bottom: 3px solid transparent;
}

.tri-r {
	margin-right: 2px;
	border-left: 3px solid #474747;
}

.tri-l {
	margin-left: 2px;
	border-right: 3px solid #474747;
}

.ck-lang {
	font-family: "Noto Sans CJK TC", sans-serif;
	font-size: 17px;
	font-weight: normal;
}

.ck-omega {
	font-family: "Liberation Serif", serif;
	font-size: 20px;
}

.ck-color {
	padding-left: 10px;
}

.ck-color u {
	font-size: 16px;
	text-decoration-thickness: 2px;
}

.ck-bgcolor {
	display: flex;
	align-items: center;
	justify-content: center;
	width: 16px;
	height: 16px;
	border-radius: 2px;
	background-color: #474747;
	font-size: 14px;
	color: #f8f8f8;
}

.ck-help {
	font-size: 20px;
}

.combo {
	display: flex;
	flex: none;
	align-items: center;
	justify-content: space-between;
	width: 110px;
	padding: 0 11px 0 13px;
	font-size: 13.5px;
	color: #474747;
}

.combo:first-child {
	width: 118px;
	padding-left: 22px;
}

.combo-cjk {
	padding-bottom: 3px;
}

.combo-second {
	width: 109px;
}

.combo-font {
	font-family: "Liberation Sans", sans-serif;
}

.ck-body {
	padding: 30px 0 0 23px;
	font-family: "Liberation Mono", monospace;
	font-size: 31.5px;
	line-height: 42px;
	color: #333;
}

.ck-line {
	white-space: nowrap;
}

.emoji {
	width: 25px;
	height: 24px;
	margin-left: 2px;
	vertical-align: 1px;
}

/* floating parts */
.save-bar {
	position: absolute;
	left: 1004px;
	top: 661px;
	display: flex;
	gap: 4px;
	width: 404px;
	height: 64px;
	padding: 11px 0 0 11px;
	border-radius: 3px;
	background-color: #f5f5f5;
	box-shadow: 2px 3px 8px rgba(0, 0, 0, 0.45);
}

.save-btn {
	display: flex;
	flex: none;
	align-items: center;
	justify-content: center;
	height: 42px;
	padding-bottom: 2px;
	border-radius: 4px;
	background-color: #aea79f;
	font-size: 15.7px;
	color: #fff;
}

.primary {
	width: 78px;
	background-color: #ec5620;
}

.save-icon {
	width: 15px;
	height: 15px;
	margin-right: 4px;
}

.btn-more { width: 156px; }
.btn-edit { width: 140px; }

.watermark {
	position: absolute;
	left: 1124px;
	top: 708px;
	font-family: "Liberation Mono", monospace;
	font-size: 16.5px;
	color: rgba(140, 140, 140, 0.4);
	white-space: nowrap;
}
```
